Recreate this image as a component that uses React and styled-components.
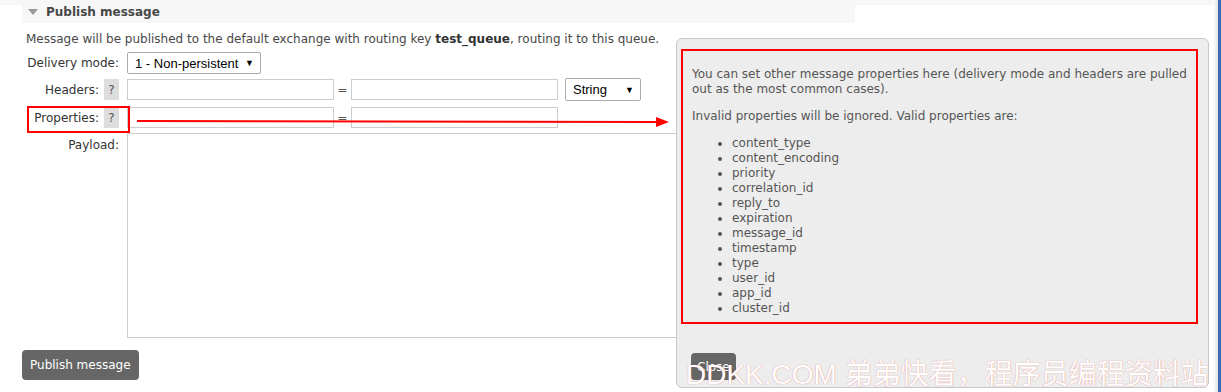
import React from 'react'
import styled, { createGlobalStyle } from 'styled-components'

const GlobalStyle = createGlobalStyle`
html, body {
  margin: 0;
  padding: 0;
  background: #fff;
}
body {
  font-family: "DejaVu Sans", Verdana, sans-serif;
  font-size: 12px;
  color: #484848;
}
`

const properties = [
  'content_type',
  'content_encoding',
  'priority',
  'correlation_id',
  'reply_to',
  'expiration',
  'message_id',
  'timestamp',
  'type',
  'user_id',
  'app_id',
  'cluster_id',
]

export default function App() {
  return (
    <>
      <GlobalStyle />
      <Page>
        <Main>
          <SectionHeader>
            <Triangle />
            <SectionTitle>Publish message</SectionTitle>
          </SectionHeader>
          <Intro>
            Message will be published to the default exchange with routing key <b>test_queue</b>, routing it to this queue.
          </Intro>
          <Form>
            <Row $h={22}>
              <Label>Delivery mode:</Label>
              <Select $w={134}>
                <span>1 - Non-persistent</span>
                <Caret>▼</Caret>
              </Select>
            </Row>
            <Row $h={21} $mt={5}>
              <Label>
                Headers: <Help>?</Help>
              </Label>
              <Field />
              <Equals>=</Equals>
              <Field />
              <Select $w={76} $h={23} $ml={7}>
                <span>String</span>
                <Caret>▼</Caret>
              </Select>
            </Row>
            <Row $h={21} $mt={7}>
              <Label>
                Properties: <Help>?</Help>
              </Label>
              <Field />
              <Equals>=</Equals>
              <Field />
            </Row>
            <Row $h={205} $mt={5} $top>
              <Label $pt={5}>Payload:</Label>
              <Payload />
            </Row>
          </Form>
          <Button>Publish message</Button>
        </Main>
        <Edge />

        <Callout />
        <Arrow width="540" height="12" viewBox="0 0 540 12">
          <line x1="0" y1="5" x2="520" y2="6" stroke="#f00" strokeWidth="2" />
          <polygon points="519,1 532,6 519,11" fill="#f00" />
        </Arrow>

        <Popup>
          <HelpBody>
            <p>You can set other message properties here (delivery mode and headers are pulled out as the most common cases).</p>
            <p>Invalid properties will be ignored. Valid properties are:</p>
            <ul>
              {properties.map((p) => (
                <li key={p}>{p}</li>
              ))}
            </ul>
          </HelpBody>
          <CloseButton>Close</CloseButton>
        </Popup>

        <Watermark>DDKK.COM 弟弟快看，程序员编程资料站</Watermark>
      </Page>
    </>
  )
}

const Page = styled.div`
position: relative;
width: 1221px;
height: 392px;
overflow: hidden;
display: flex;
background: linear-gradient(#f7f7f7 0 5px, #fff 5px);
`
const Main = styled.div`
width: 833px;
padding-left: 22px;
flex: none;
`
const Edge = styled.div`
margin-left: auto;
width: 8px;
background: linear-gradient(90deg, #fff, #e4e4e4 60%, #3b6cb5 62%, #3b6cb5);
`
const SectionHeader = styled.div`
height: 23px;
background: #f7f7f7;
display: flex;
align-items: center;
padding-left: 6px;
gap: 8px;
`
const Triangle = styled.span`
width: 0;
height: 0;
border-left: 5px solid transparent;
border-right: 5px solid transparent;
border-top: 6px solid #9a9a9a;
`
const SectionTitle = styled.span`
font-weight: bold;
font-size: 12px;
color: #484848;
`
const Intro = styled.div`
margin-top: 9px;
padding-left: 4px;
line-height: 15px;
color: #484848;
b {
  color: #333;
}
`
const Form = styled.div`
margin-top: 5px;
display: flex;
flex-direction: column;
`
const Row = styled.div`
display: flex;
align-items: ${(p) => (p.$top ? 'flex-start' : 'center')};
height: ${(p) => p.$h}px;
margin-top: ${(p) => p.$mt || 0}px;
`
const Label = styled.div`
width: 97px;
margin-right: 8px;
flex: none;
display: flex;
justify-content: flex-end;
align-items: center;
gap: 5px;
color: #333;
padding-top: ${(p) => p.$pt || 0}px;
`
const Help = styled.span`
display: inline-flex;
align-items: center;
justify-content: center;
width: 15px;
height: 21px;
background: #ddd;
color: #555;
font-size: 12px;
`
const Select = styled.div`
box-sizing: border-box;
width: ${(p) => p.$w}px;
height: ${(p) => p.$h || 22}px;
margin-left: ${(p) => p.$ml || 0}px;
border: 1px solid #aaa;
border-radius: 2px;
background: #fff;
display: flex;
align-items: center;
justify-content: space-between;
padding: 0 6px 0 7px;
font-family: "Liberation Sans", Arial, sans-serif;
font-size: 13px;
color: #000;
`
const Caret = styled.span`
font-size: 9px;
`
const Field = styled.div`
box-sizing: border-box;
width: 207px;
height: 100%;
border: 1px solid #ccc;
background: #fff;
`
const Equals = styled.span`
width: 17px;
text-align: center;
color: #555;
`
const Payload = styled.div`
box-sizing: border-box;
width: 560px;
height: 100%;
border: 1px solid #ccc;
border-right: none;
background: #fff;
`
const Button = styled.div`
margin-top: 12px;
display: inline-flex;
align-items: center;
height: 30px;
padding: 0 8px;
background: #666;
color: #fff;
border-radius: 4px;
font-size: 12px;
`
const Callout = styled.div`
position: absolute;
left: 27px;
top: 106px;
width: 99px;
height: 23px;
border: 2px solid #f00;
`
const Arrow = styled.svg`
position: absolute;
left: 137px;
top: 116px;
`
const Popup = styled.div`
position: absolute;
left: 676px;
top: 38px;
width: 533px;
height: 350px;
background: #ededed;
border: 1px solid #c8c8c8;
border-radius: 6px;
padding: 10px 0 0 4px;
box-sizing: border-box;
`
const HelpBody = styled.div`
width: 517px;
height: 275px;
box-sizing: border-box;
border: 2px solid #f00;
padding: 16px 0 0 9px;
line-height: 15px;
color: #555;
p {
  margin: 0 0 12px;
}
ul {
  margin: 0;
  padding-left: 40px;
}
`
const CloseButton = styled.div`
margin: 29px 0 0 10px;
display: inline-flex;
align-items: center;
height: 27px;
padding: 0 6px;
background: #666;
color: #fff;
border-radius: 4px;
`
const Watermark = styled.div`
position: absolute;
left: 686px;
top: 360px;
white-space: nowrap;
font-family: "Liberation Sans", "Noto Sans CJK SC", sans-serif;
font-size: 28px;
line-height: 30px;
color: #fff;
text-shadow: 0 0 1px rgba(220, 60, 60, 0.7);
`
